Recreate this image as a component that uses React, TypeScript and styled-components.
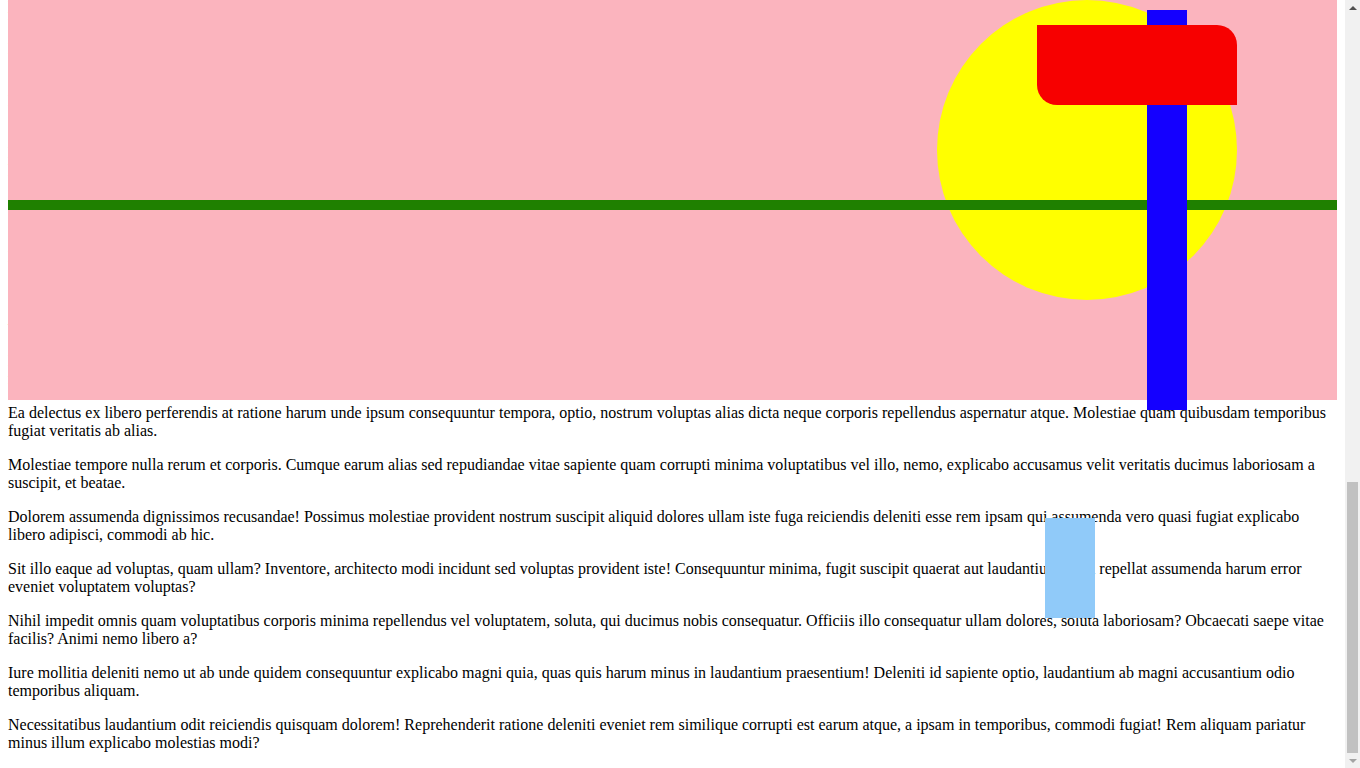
import React, { useLayoutEffect, useRef, useState } from "react";
import styled, { createGlobalStyle } from "styled-components";

const PARAGRAPHS = [
  "Ea delectus ex libero perferendis at ratione harum unde ipsum consequuntur tempora, optio, nostrum voluptas alias dicta neque corporis repellendus aspernatur atque. Molestiae quam quibusdam temporibus fugiat veritatis ab alias.",
  "Molestiae tempore nulla rerum et corporis. Cumque earum alias sed repudiandae vitae sapiente quam corrupti minima voluptatibus vel illo, nemo, explicabo accusamus velit veritatis ducimus laboriosam a suscipit, et beatae.",
  "Dolorem assumenda dignissimos recusandae! Possimus molestiae provident nostrum suscipit aliquid dolores ullam iste fuga reiciendis deleniti esse rem ipsam qui assumenda vero quasi fugiat explicabo libero adipisci, commodi ab hic.",
  "Sit illo eaque ad voluptas, quam ullam? Inventore, architecto modi incidunt sed voluptas provident iste! Consequuntur minima, fugit suscipit quaerat aut laudantium quod repellat assumenda harum error eveniet voluptatem voluptas?",
  "Nihil impedit omnis quam voluptatibus corporis minima repellendus vel voluptatem, soluta, qui ducimus nobis consequatur. Officiis illo consequatur ullam dolores, soluta laboriosam? Obcaecati saepe vitae facilis? Animi nemo libero a?",
  "Iure mollitia deleniti nemo ut ab unde quidem consequuntur explicabo magni quia, quas quis harum minus in laudantium praesentium! Deleniti id sapiente optio, laudantium ab magni accusantium odio temporibus aliquam.",
  "Necessitatibus laudantium odit reiciendis quisquam dolorem! Reprehenderit ratione deleniti eveniet rem similique corrupti est earum atque, a ipsam in temporibus, commodi fugiat! Rem aliquam pariatur minus illum explicabo molestias modi?",
];

// the article is long, the scene stays pinned while it scrolls underneath
const PARAGRAPH_COUNT = 32;
const ARROW = 15;

const GlobalStyle = createGlobalStyle`
  html, body {
    margin: 0;
    height: 100%;
    overflow: hidden;
  }
  body {
    background: #fff;
    color: #000;
    font-family: "Liberation Serif", "Times New Roman", serif;
    font-size: 16px;
  }
`;

const Page = styled.div`
  display: flex;
  height: 100vh;
`;

const Viewport = styled.div`
  flex: 1;
  min-width: 0;
  overflow-y: scroll;
  scrollbar-width: none;
  &::-webkit-scrollbar {
    display: none;
  }
`;

const Article = styled.div`
  padding: 8px 8px 0;
`;

const Scene = styled.div`
  position: sticky;
  top: 0;
  z-index: 1;
  height: 400px;
  background-color: #fbb4be;
`;

const Sun = styled.div`
  position: absolute;
  top: 0;
  left: 929px;
  width: 300px;
  height: 300px;
  border-radius: 50%;
  background-color: #ffff00;
`;

const Horizon = styled.div`
  position: absolute;
  top: 200px;
  left: 0;
  right: 0;
  height: 10px;
  background-color: #1f8000;
`;

const Post = styled.div`
  position: absolute;
  top: 10px;
  left: 1139px;
  width: 40px;
  height: 400px;
  background-color: #1400ff;
`;

const Sign = styled.div`
  position: absolute;
  top: 25px;
  left: 1029px;
  width: 200px;
  height: 80px;
  border-radius: 0 20px 0 20px;
  background-color: #f70000;
`;

const Marker = styled.div`
  position: fixed;
  top: 518px;
  left: 1045px;
  z-index: 2;
  width: 50px;
  height: 100px;
  background-color: #90caf9;
`;

const Paragraph = styled.p`
  margin: 16px 0;
`;

const Rail = styled.div`
  display: flex;
  flex-direction: column;
  width: 15px;
  flex-shrink: 0;
  background-color: #f1f1f1;
`;

const ArrowButton = styled.div`
  display: flex;
  align-items: center;
  justify-content: center;
  height: ${ARROW}px;
  flex-shrink: 0;
`;

const Triangle = styled.div<{ $down?: boolean; $disabled?: boolean }>`
  width: 0;
  height: 0;
  border-left: 4px solid transparent;
  border-right: 4px solid transparent;
  ${({ $down, $disabled }) => {
    const c = $disabled ? "#a3a3a3" : "#505050";
    return $down
      ? `border-top: 4px solid ${c};`
      : `border-bottom: 4px solid ${c};`;
  }}
`;

const Track = styled.div`
  position: relative;
  flex: 1;
`;

const Thumb = styled.div`
  position: absolute;
  left: 2px;
  right: 2px;
  background-color: #c1c1c1;
`;

export default function App() {
  const viewport = useRef<HTMLDivElement>(null);
  const [bar, setBar] = useState({ top: 0, height: 0, atTop: true, atEnd: false });

  const measure = () => {
    const el = viewport.current;
    if (!el) return;
    const track = el.clientHeight - ARROW * 2;
    const height = Math.max(20, (track * el.clientHeight) / el.scrollHeight);
    const range = el.scrollHeight - el.clientHeight;
    const top = range > 0 ? ((track - height) * el.scrollTop) / range : 0;
    setBar({
      top,
      height,
      atTop: el.scrollTop <= 0,
      atEnd: el.scrollTop >= range - 1,
    });
  };

  useLayoutEffect(() => {
    const el = viewport.current;
    if (el) el.scrollTop = el.scrollHeight;
    measure();
  }, []);

  const offset = PARAGRAPH_COUNT % PARAGRAPHS.length;

  return (
    <>
      <GlobalStyle />
      <Page>
        <Viewport ref={viewport} onScroll={measure}>
          <Article>
            <Scene>
              <Sun />
              <Horizon />
              <Post />
              <Sign />
            </Scene>
            {Array.from({ length: PARAGRAPH_COUNT }, (_, i) => (
              <Paragraph key={i}>
                {PARAGRAPHS[(i + PARAGRAPHS.length - offset) % PARAGRAPHS.length]}
              </Paragraph>
            ))}
          </Article>
        </Viewport>
        <Rail>
          <ArrowButton>
            <Triangle $disabled={bar.atTop} />
          </ArrowButton>
          <Track>
            <Thumb style={{ top: bar.top, height: bar.height }} />
          </Track>
          <ArrowButton>
            <Triangle $down $disabled={bar.atEnd} />
          </ArrowButton>
        </Rail>
      </Page>
      <Marker />
    </>
  );
}
